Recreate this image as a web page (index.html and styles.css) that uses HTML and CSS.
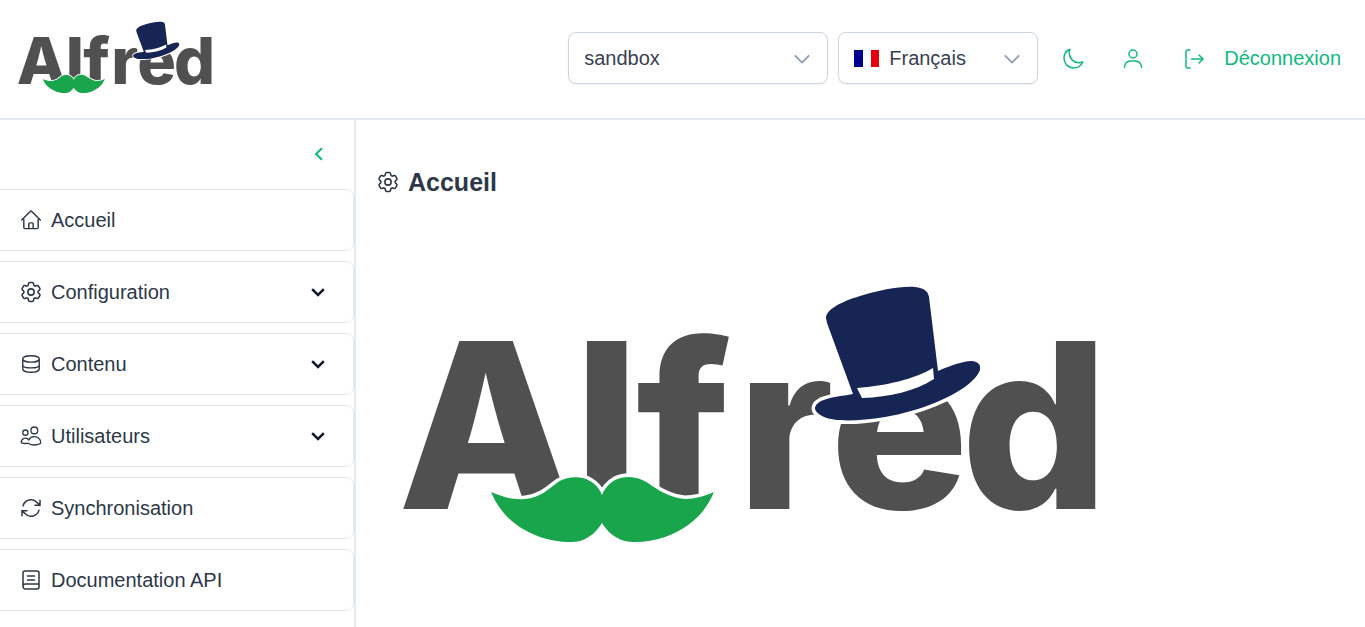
FILE: index.html
```html
<!DOCTYPE html>
<html lang="fr">
<head>
  <meta charset="UTF-8">
  <meta name="viewport" content="width=device-width, initial-scale=1.0">
  <title>Alfred</title>
  <link rel="stylesheet" href="styles.css">
</head>
<body>
  <!-- logo, used in the header and on the home page -->
  <svg class="defs" aria-hidden="true">
    <symbol id="alfred-logo" viewBox="400 283 700 265">
      <text class="logo-word" y="508" x="398 574 636 737 830 961">Alfred</text>
      <path class="logo-halo" d="M491 491C505 497 515 499 525 498C540 497 550 487 558 481C566 476 580 474 590 480C597 484 600 489 602 494C604 489 608 483 615 479C625 474 638 475 648 482C658 489 670 497 685 498C695 498 705 495 714 491C705 512 690 527 665 536C650 541 635 542 625 540C614 537 607 530 602 522C597 530 590 537 580 540C570 542 555 541 540 536C515 527 500 512 491 491Z"/>
      <path class="logo-green" d="M491 491C505 497 515 499 525 498C540 497 550 487 558 481C566 476 580 474 590 480C597 484 600 489 602 494C604 489 608 483 615 479C625 474 638 475 648 482C658 489 670 497 685 498C695 498 705 495 714 491C705 512 690 527 665 536C650 541 635 542 625 540C614 537 607 530 602 522C597 530 590 537 580 540C570 542 555 541 540 536C515 527 500 512 491 491Z"/>
      <path class="logo-halo" d="M938 370C955 363 970 358 976 361C983 364 981 372 972 380C955 396 920 410 885 416C860 420 835 421 824 416C813 411 812 405 821 400C830 396 842 395 853 393Z"/>
      <path class="logo-navy" d="M826 317C826 309 840 301 860 295C880 289 900 285 915 286C924 287 928 290 929 296L938 370C955 363 970 358 976 361C983 364 981 372 972 380C955 396 920 410 885 416C860 420 835 421 824 416C813 411 812 405 821 400C830 396 842 395 853 393L827 322Z"/>
      <path class="logo-band" d="M857 387C885 385 915 378 933 367L934 378C915 390 890 396 862 397Z"/>
    </symbol>
    <g id="cog">
      <path d="M9.594 3.940c.09-.542.56-.94 1.110-.94h2.593c.55 0 1.020.398 1.110.94l.213 1.281c.063.374.313.686.645.870.074.04.147.083.22.127.325.196.72.257 1.075.124l1.217-.456a1.125 1.125 0 0 1 1.370.49l1.296 2.247a1.125 1.125 0 0 1-.26 1.431l-1.003.827c-.293.241-.438.613-.43.992a7.723 7.723 0 0 1 0 .255c-.008.378.137.75.43.991l1.004.827c.424.35.534.955.26 1.430l-1.298 2.247a1.125 1.125 0 0 1-1.369.491l-1.217-.456c-.355-.133-.75-.072-1.076.124a6.470 6.470 0 0 1-.22.128c-.331.183-.581.495-.644.869l-.213 1.281c-.09.543-.56.94-1.110.94h-2.594c-.55 0-1.019-.398-1.110-.94l-.213-1.281c-.062-.374-.312-.686-.644-.87a6.520 6.520 0 0 1-.22-.127c-.325-.196-.72-.257-1.076-.124l-1.217.456a1.125 1.125 0 0 1-1.369-.49l-1.297-2.247a1.125 1.125 0 0 1 .26-1.431l1.004-.827c.292-.24.437-.613.43-.991a6.932 6.932 0 0 1 0-.255c.007-.38-.138-.751-.43-.992l-1.004-.827a1.125 1.125 0 0 1-.26-1.430l1.297-2.247a1.125 1.125 0 0 1 1.370-.491l1.216.456c.356.133.751.072 1.076-.124.072-.044.146-.086.22-.128.332-.183.582-.495.644-.869l.214-1.280Z"/>
      <path d="M15 12a3 3 0 1 1-6 0 3 3 0 0 1 6 0Z"/>
    </g>
  </svg>

  <header class="topbar">
    <svg class="logo-small"><use href="#alfred-logo"/></svg>
    <div class="topbar-actions">
      <button class="picker picker-site" type="button">
        <span>sandbox</span>
        <svg class="picker-arrow" viewBox="0 0 20 20"><path d="M2 6l8 8 8-8"/></svg>
      </button>
      <button class="picker picker-lang" type="button">
        <span class="flag"><i class="flag-blue"></i><i class="flag-white"></i><i class="flag-red"></i></span>
        <span>Français</span>
        <svg class="picker-arrow" viewBox="0 0 20 20"><path d="M2 6l8 8 8-8"/></svg>
      </button>
      <a class="top-icon" href="#">
        <svg class="icon" viewBox="0 0 24 24"><path d="M21.752 15.002A9.72 9.72 0 0 1 18 15.75c-5.385 0-9.75-4.365-9.75-9.75 0-1.33.266-2.597.748-3.752A9.753 9.753 0 0 0 3 11.25C3 16.635 7.365 21 12.75 21a9.753 9.753 0 0 0 9.002-5.998Z"/></svg>
      </a>
      <a class="top-icon" href="#">
        <svg class="icon" viewBox="0 0 24 24"><path d="M16 7a4 4 0 1 1-8 0 4 4 0 0 1 8 0ZM3.500 20.500v-.5a6 6 0 0 1 6-6h5a6 6 0 0 1 6 6v.5"/></svg>
      </a>
      <a class="logout" href="#">
        <svg class="icon" viewBox="0 0 24 24"><path d="M8 3H5.500a1.500 1.500 0 0 0-1.500 1.500v15A1.500 1.500 0 0 0 5.500 21H8M9.500 12H21M17 8l4 4-4 4"/></svg>
        <span>Déconnexion</span>
      </a>
    </div>
  </header>

  <div class="layout">
    <aside class="sidebar">
      <div class="sidebar-toggle">
        <svg viewBox="0 0 24 24"><path d="M15.500 5l-7 7 7 7"/></svg>
      </div>
      <nav class="menu">
        <a class="menu-item" href="#">
          <svg class="icon" viewBox=".5 .5 23 23"><path d="m2.250 12 8.954-8.955c.44-.439 1.152-.439 1.591 0L21.750 12M4.500 9.750v10.125c0 .621.504 1.125 1.125 1.125H9.750v-4.875c0-.621.504-1.125 1.125-1.125h2.250c.621 0 1.125.504 1.125 1.125V21h4.125c.621 0 1.125-.504 1.125-1.125V9.750M8.250 21h8.250"/></svg>
          <span>Accueil</span>
        </a>
        <a class="menu-item" href="#">
          <svg class="icon" viewBox="1.500 1.500 21 21"><use href="#cog"/></svg>
          <span>Configuration</span>
          <svg class="menu-arrow" viewBox="0 0 24 24"><path d="M5 8.500l7 7 7-7"/></svg>
        </a>
        <a class="menu-item" href="#">
          <svg class="icon" viewBox="0 0 24 24"><path d="M3 6.500C3 4.500 7 3 12 3s9 1.500 9 3.500v11c0 2-4 3.500-9 3.500s-9-1.500-9-3.500v-11Zm0 0c0 2 4 3.500 9 3.500s9-1.500 9-3.500M3 13c0 2 4 3.200 9 3.200s9-1.200 9-3.200"/></svg>
          <span>Contenu</span>
          <svg class="menu-arrow" viewBox="0 0 24 24"><path d="M5 8.500l7 7 7-7"/></svg>
        </a>
        <a class="menu-item" href="#">
          <svg class="icon icon-thin" viewBox="1 1 22 22"><path transform="matrix(-1 0 0 1 24 0)" d="M15 19.128a9.380 9.380 0 0 0 2.625.372 9.337 9.337 0 0 0 4.121-.952 4.125 4.125 0 0 0-7.533-2.493M15 19.128v.106A12.318 12.318 0 0 1 8.624 21c-2.331 0-4.512-.645-6.374-1.766l-.001-.109a6.375 6.375 0 0 1 11.964-3.070M12 6.375a3.375 3.375 0 1 1-6.750 0 3.375 3.375 0 0 1 6.750 0Zm8.250 2.250a2.625 2.625 0 1 1-5.250 0 2.625 2.625 0 0 1 5.250 0Z"/></svg>
          <span>Utilisateurs</span>
          <svg class="menu-arrow" viewBox="0 0 24 24"><path d="M5 8.500l7 7 7-7"/></svg>
        </a>
        <a class="menu-item" href="#">
          <svg class="icon" viewBox="1 1 22 22"><path d="M16.023 9.348h4.992v-.001M2.985 19.644v-4.992m0 0h4.992m-4.993 0 3.181 3.183a8.250 8.250 0 0 0 13.803-3.700M4.031 9.865a8.250 8.250 0 0 1 13.803-3.700l3.181 3.182m0-4.991v4.990"/></svg>
          <span>Synchronisation</span>
        </a>
        <a class="menu-item" href="#">
          <svg class="icon" viewBox="1 1 22 22"><path d="M4 18.500V5a2 2 0 0 1 2-2h12a2 2 0 0 1 2 2v14a2 2 0 0 1-2 2H6.500A2.500 2.500 0 0 1 4 18.500Zm0 0A2.500 2.500 0 0 1 6.500 16H20M8.500 8h7M8.500 12h7"/></svg>
          <span>Documentation API</span>
        </a>
      </nav>
    </aside>

    <main class="content">
      <h1 class="page-title">
        <svg class="icon" viewBox="1.500 1.500 21 21"><use href="#cog"/></svg>
        <span>Accueil</span>
      </h1>
      <svg class="logo-large"><use href="#alfred-logo"/></svg>
    </main>
  </div>
</body>
</html>
```

FILE: styles.css
```css
* {
  box-sizing: border-box;
}

html,
body {
  height: 100%;
}

body {
  margin: 0;
  font-family: "Liberation Sans", Arial, sans-serif;
  font-size: 20px;
  color: #2d3748;
  background-color: #fff;
  overflow: hidden;
}

a {
  color: inherit;
  text-decoration: none;
}

.defs {
  display: none;
}

.icon {
  width: 22px;
  height: 22px;
  flex: none;
  fill: none;
  stroke: currentColor;
  stroke-width: 1.5;
  stroke-linecap: round;
  stroke-linejoin: round;
}

.icon-thin {
  stroke-width: 1.3;
}

/* logo */
.logo-word {
  font-family: Inter, "Liberation Sans", sans-serif;
  font-size: 231px;
  font-weight: 800;
  fill: #505050;
}

.logo-green {
  fill: #18a54b;
}

.logo-navy {
  fill: #172554;
}

.logo-band {
  fill: #fff;
}

.logo-halo {
  fill: #fff;
  stroke: #fff;
  stroke-width: 7;
}

.logo-small {
  width: 196px;
  height: 74px;
}

.logo-large {
  display: block;
  width: 700px;
  height: 265px;
  margin: 85px 0 0 23px;
}

/* top bar */
.topbar {
  display: flex;
  align-items: center;
  justify-content: space-between;
  height: 120px;
  padding: 0 24px 3px 17px;
  border-bottom: 2px solid #e2e8f0;
}

.topbar-actions {
  display: flex;
  align-items: center;
}

.picker {
  display: flex;
  align-items: center;
  height: 52px;
  padding: 2px 16px 0 15px;
  margin-right: 10px;
  border: 1px solid #cbd5e0;
  border-radius: 8px;
  background-color: #fff;
  box-shadow: 0 1px 2px rgba(0, 0, 0, 0.05);
  font: inherit;
  color: #374151;
  text-align: left;
}

.picker-site {
  width: 260px;
}

.picker-lang {
  width: 200px;
}

.picker-arrow {
  width: 18px;
  height: 18px;
  margin-left: auto;
  fill: none;
  stroke: #8f9bb0;
  stroke-width: 2;
}

.flag {
  display: flex;
  width: 25px;
  height: 17px;
  margin-right: 10px;
}

.flag i {
  flex: 1;
}

.flag-blue {
  background-color: #00008f;
}

.flag-white {
  background-color: #fff;
}

.flag-red {
  background-color: #e8000f;
}

.top-icon {
  display: flex;
  margin: 2px 24px 0 13px;
  color: #10b981;
}

.top-icon + .top-icon {
  margin-left: 12px;
}

.top-icon .icon,
.logout .icon {
  width: 24px;
  height: 24px;
}

.logout {
  display: flex;
  align-items: center;
  gap: 18px;
  margin: 2px 0 0 13px;
  color: #10b981;
}

/* side menu */
.layout {
  display: flex;
  height: calc(100% - 120px);
}

.sidebar {
  width: 356px;
  flex: none;
  padding: 24px 0 0;
  border-right: 2px solid #e2e8f0;
}

.sidebar-toggle {
  display: flex;
  justify-content: flex-end;
  height: 20px;
  padding-right: 25px;
  margin-bottom: 25px;
}

.sidebar-toggle svg {
  width: 20px;
  height: 20px;
  fill: none;
  stroke: #10b981;
  stroke-width: 2.500;
}

.menu {
  display: flex;
  flex-direction: column;
  gap: 10px;
  margin-left: -8px;
}

.menu-item {
  display: flex;
  align-items: center;
  gap: 9px;
  height: 62px;
  padding: 0 25px 0 27px;
  border: 1px solid #e2e8f0;
  border-radius: 8px;
  background-color: #fff;
}

.menu-arrow {
  width: 20px;
  height: 20px;
  margin-left: auto;
  fill: none;
  stroke: #0f172a;
  stroke-width: 3;
}

/* page */
.content {
  flex: 1;
  padding: 45px 0 0 21px;
}

.page-title {
  display: flex;
  align-items: center;
  gap: 9px;
  margin: 0;
  font-size: 25px;
  line-height: 34px;
  font-weight: 700;
}
```
